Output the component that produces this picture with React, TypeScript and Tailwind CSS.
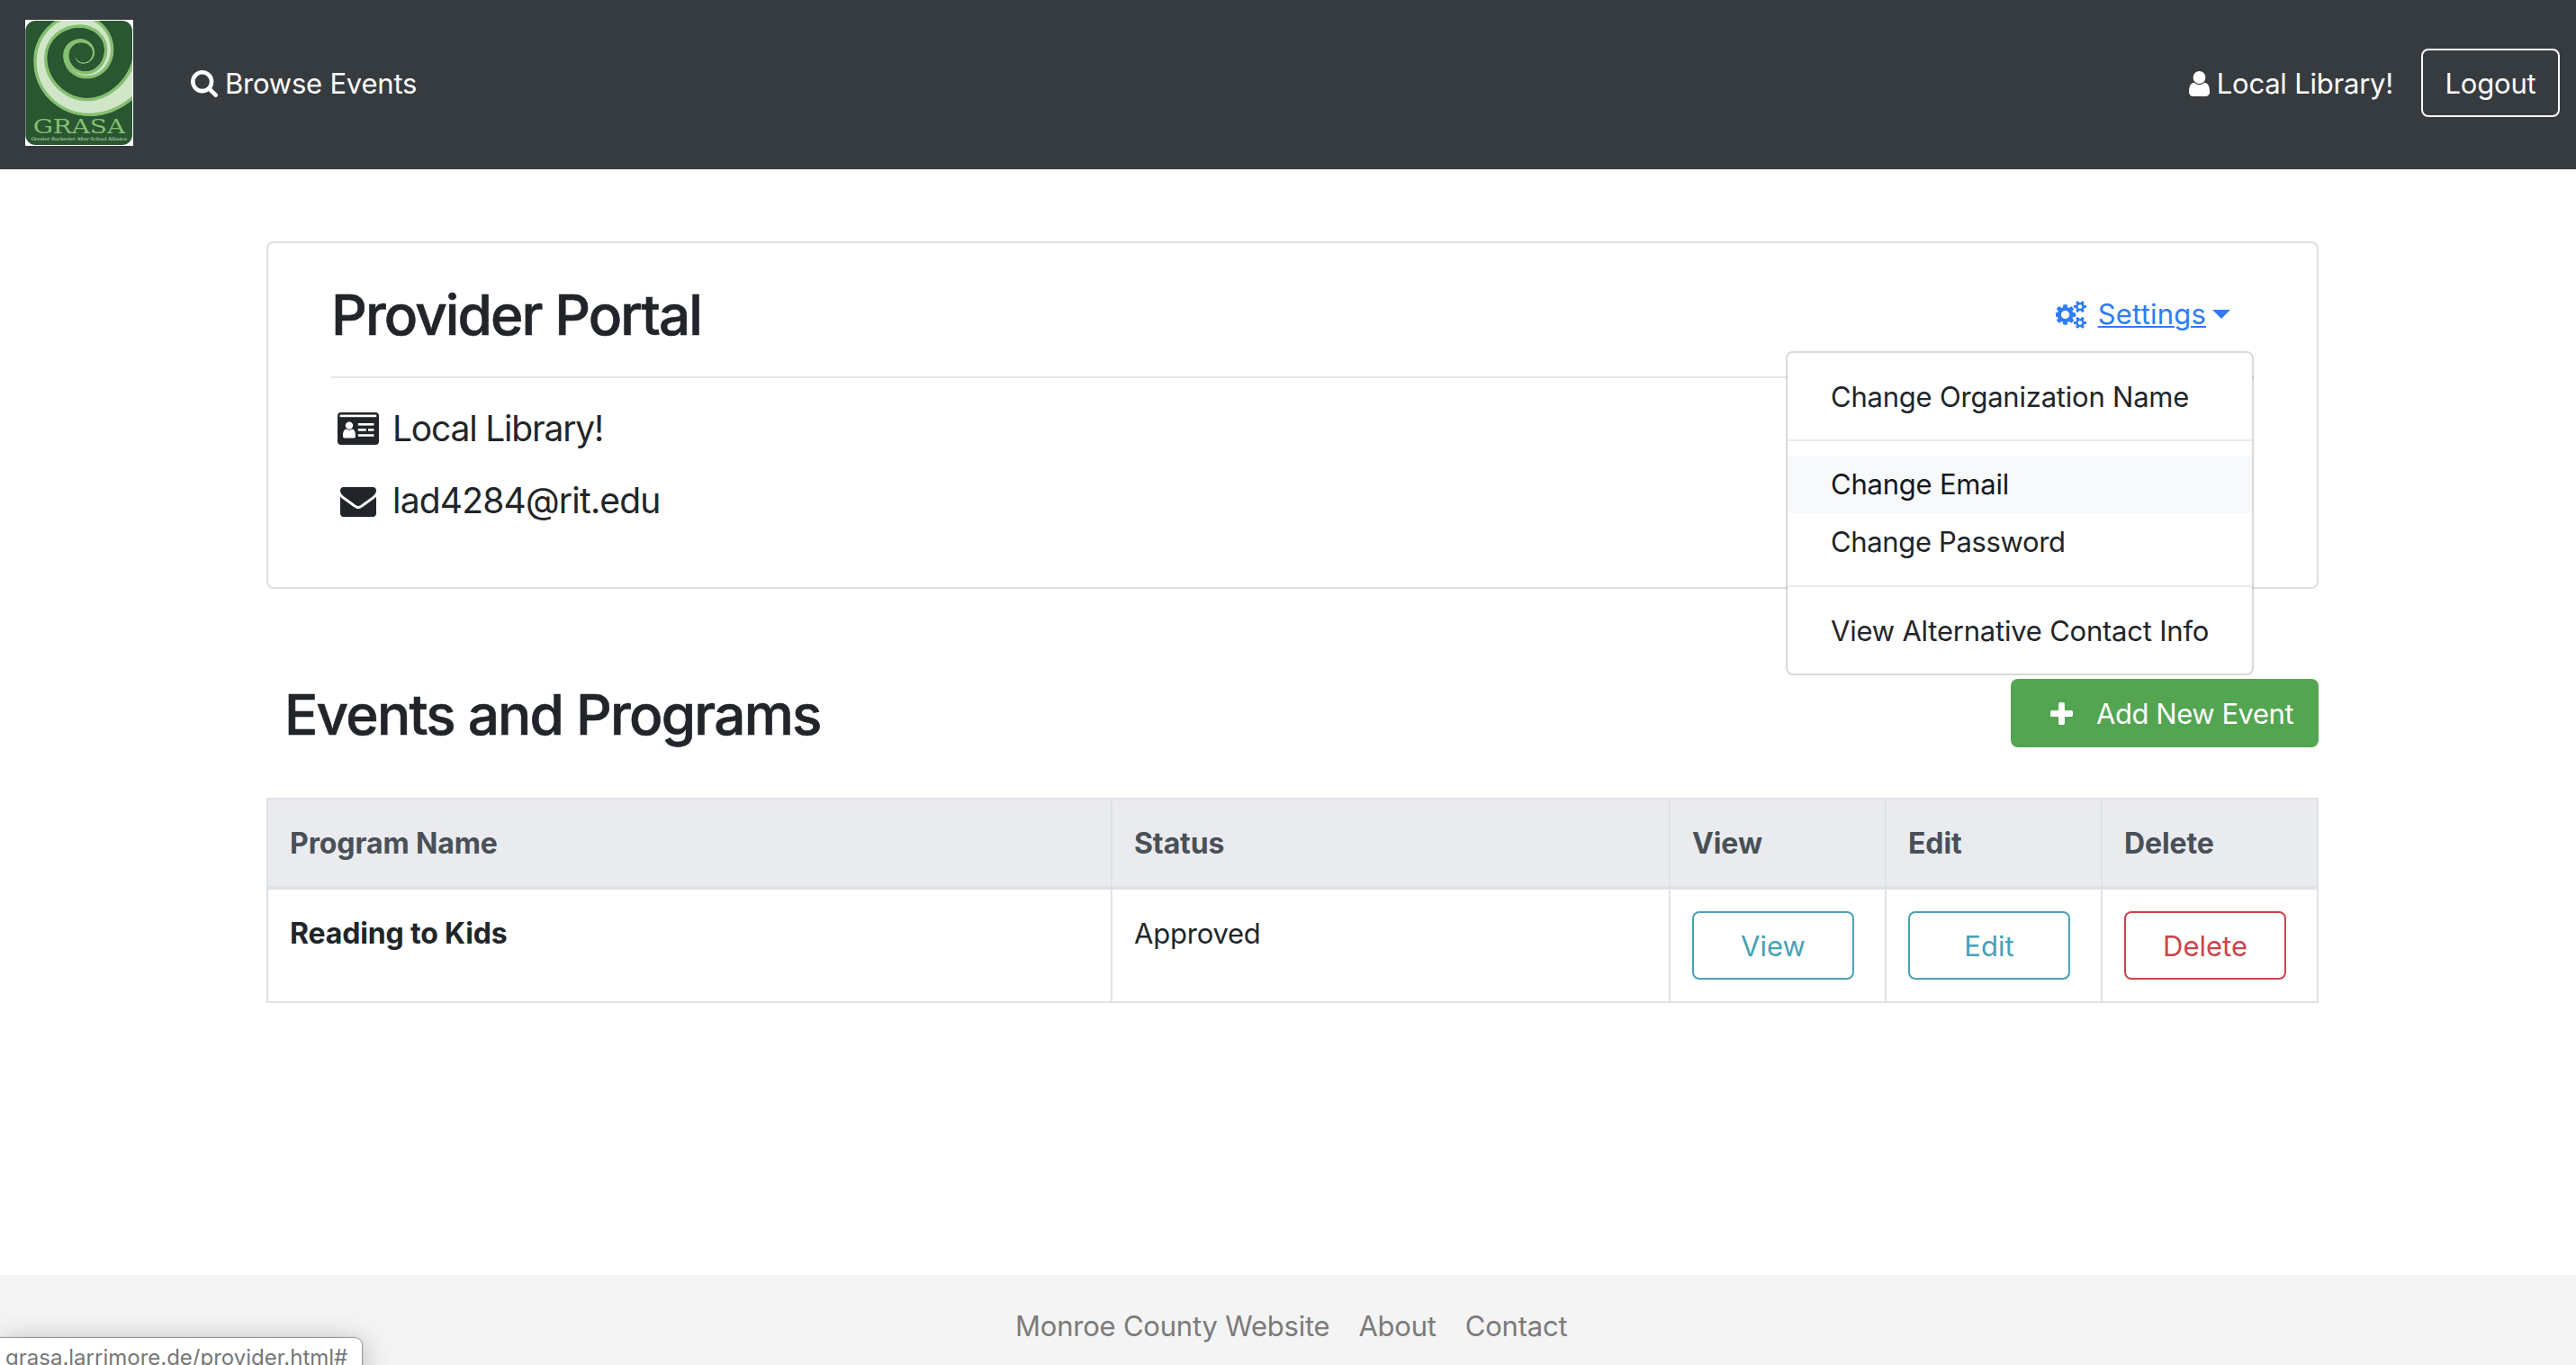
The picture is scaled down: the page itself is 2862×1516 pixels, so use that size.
import type { ReactNode } from "react";

function Glyph({ d, box, className }: { d: string; box: string; className: string }) {
  return (
    <svg viewBox={box} className={className} fill="currentColor" preserveAspectRatio="none" aria-hidden="true">
      <path d={d} />
    </svg>
  );
}

const SEARCH =
  "M1216 832q0-185-131.5-316.5t-316.5-131.5-316.5 131.5-131.5 316.5 131.5 316.5 316.5 131.5 316.5-131.5 131.5-316.5zm512 832q0 52-38 90t-90 38q-54 0-90-38l-343-342q-179 124-399 124-143 0-273.5-55.5t-225-150-150-225-55.5-273.5 55.5-273.5 150-225 225-150 273.5-55.5 273.5 55.5 225 150 150 225 55.5 273.5q0 220-124 399l343 343q37 37 37 90z";
const USER =
  "M1536 1399q0 109-62.5 187t-150.5 78h-854q-88 0-150.5-78t-62.5-187q0-85 8.5-160.5t31.5-152 58.5-131 94-89 134.5-34.5q131 128 313 128t313-128q76 0 134.5 34.5t94 89 58.5 131 31.5 152 8.5 160.5zm-256-887q0 159-112.5 271.5t-271.5 112.5-271.5-112.5-112.5-271.5 112.5-271.5 271.5-112.5 271.5 112.5 112.5 271.5z";
const ENVELOPE =
  "M1792 710v794q0 66-47 113t-113 47h-1472q-66 0-113-47t-47-113v-794q44 49 101 87 362 246 497 345 57 42 92.5 65.5t94.5 48 110 24.5h2q51 0 110-24.5t94.5-48 92.5-65.5q170-123 498-345 57-39 100-87zm0-294q0 79-49 151t-122 123q-376 261-468 325-10 7-42.5 31t-54 38.5-52 32.5-57.5 27-50 9h-2q-23 0-50-9t-57.5-27-52-32.5-54-38.5-42.5-31q-91-64-262-182.5t-205-142.5q-62-42-117-115.5t-55-136.5q0-78 41.5-130t118.5-52h1472q65 0 112.5 47t47.5 113z";
const PLUS =
  "M1600 736v192q0 40-28 68t-68 28h-416v416q0 40-28 68t-68 28h-192q-40 0-68-28t-28-68v-416h-416q-40 0-68-28t-28-68v-192q0-40 28-68t68-28h416v-416q0-40 28-68t68-28h192q40 0 68 28t28 68v416h416q40 0 68 28t28 68z";
const COGS =
  "M832 896q0-106-75-181t-181-75-181 75-75 181 75 181 181 75 181-75 75-181zm768 512q0-52-38-90t-90-38-90 38-38 90q0 53 37.5 90.5t90.5 37.5 90.5-37.5 37.5-90.5zm0-1024q0-52-38-90t-90-38-90 38-38 90q0 53 37.5 90.5t90.5 37.5 90.5-37.5 37.5-90.5zm-384 421v185q0 10-7 19.5t-16 10.5l-155 24q-11 35-32 76 34 48 90 115 7 11 7 20 0 12-7 19-23 30-82.5 89.5t-78.5 59.5q-11 0-21-7l-115-90q-37 19-77 31-11 108-23 155-7 24-30 24h-186q-11 0-20-7.5t-10-17.5l-23-153q-34-10-75-31l-118 89q-7 7-20 7-11 0-21-8-144-133-144-160 0-9 7-19 10-14 41-53t47-61q-23-44-35-82l-152-24q-10-1-17-9.5t-7-19.5v-185q0-10 7-19.5t16-10.5l155-24q11-35 32-76-34-48-90-115-7-11-7-20 0-12 7-20 22-30 82-89t79-59q11 0 21 7l115 90q34-18 77-32 11-108 23-154 7-24 30-24h186q11 0 20 7.5t10 17.5l23 153q34 10 75 31l118-89q8-7 20-7 11 0 21 8 144 133 144 160 0 8-7 19-12 16-42 54t-45 60q23 48 34 82l152 23q10 2 17 10.5t7 19.5zm640 533v140q0 16-149 31-12 27-30 52 51 113 51 138 0 4-4 7-122 71-124 71-8 0-46-47t-52-68q-20 2-30 2t-30-2q-14 21-52 68t-46 47q-2 0-124-71-4-3-4-7 0-25 51-138-18-25-30-52-149-15-149-31v-140q0-16 149-31 13-29 30-52-51-113-51-138 0-4 4-7 4-2 35-20t59-34 30-16q8 0 46 46.5t52 67.5q20-2 30-2t30 2q51-71 92-112l6-2q4 0 124 70 4 3 4 7 0 25-51 138 17 23 30 52 149 15 149 31zm0-1024v140q0 16-149 31-12 27-30 52 51 113 51 138 0 4-4 7-122 71-124 71-8 0-46-47t-52-68q-20 2-30 2t-30-2q-14 21-52 68t-46 47q-2 0-124-71-4-3-4-7 0-25 51-138-18-25-30-52-149-15-149-31v-140q0-16 149-31 13-29 30-52-51-113-51-138 0-4 4-7 4-2 35-20t59-34 30-16q8 0 46 46.5t52 67.5q20-2 30-2t30 2q51-71 92-112l6-2q4 0 124 70 4 3 4 7 0 25-51 138 17 23 30 52 149 15 149 31z";

const SWIRL =
  "M385 240C335 295 272 321 216 321C112 321 28 240 28 139C28 60 85 -18 178 -18C245 -18 295 38 295 99C295 153 255 196 206 196C162 196 127 162 127 119C127 88 152 64 184 64C210 64 231 84 231 109C231 130 214 146 194 146C180 146 168 137 168 124C170 135 182 143 194 143C212 143 225 128 225 109C225 90 207 76 186 76C163 76 145 95 145 119C145 148 170 172 201 172C236 172 264 140 264 99C264 58 227 26 181 26C126 26 73 66 73 129C73 200 138 261 206 261C275 261 342 200 358 130L385 90Z";

function IdCard() {
  return (
    <svg viewBox="0 0 46 36" className="ml-[7px] h-[36px] w-[46px]" aria-hidden="true">
      <rect width="46" height="36" rx="4" fill="#212529" />
      <g fill="#fff">
        <rect x="2.6" y="2.6" width="40.6" height="2.6" />
        <circle cx="13" cy="14.6" r="4.2" />
        <path d="M6 26c0-4.600 1.600-7.400 3.800-7.400 1 .8 2 1.100 3.200 1.100s2.200-.3 3.200-1.100c2.200 0 3.800 2.800 3.800 7.400 0 1.800-.8 2.600-2 2.600H8c-1.200 0-2-.8-2-2.600z" />
        <rect x="22.800" y="12" width="17.600" height="2.600" />
        <rect x="22.800" y="18.100" width="9" height="2.600" />
        <rect x="34" y="18.100" width="6.400" height="2.600" />
        <rect x="22.800" y="24.200" width="17.600" height="2.600" />
      </g>
    </svg>
  );
}

function Logo() {
  return (
    <svg viewBox="0 0 360 420" className="h-[140px] w-[120px]" role="img" aria-label="GRASA">
      <defs>
        <clipPath id="logo-card">
          <rect x="1" y="3" width="356" height="414" rx="34" />
        </clipPath>
        <clipPath id="logo-swirl">
          <path d={SWIRL} />
        </clipPath>
      </defs>
      <rect width="360" height="420" fill="#fff" />
      <g clipPath="url(#logo-card)">
        <rect width="360" height="420" fill="#2a5631" />
        <g clipPath="url(#logo-swirl)">
          <path d={SWIRL} fill="#d1e6c9" stroke="#84bf70" strokeWidth="20" />
        </g>
      </g>
      <text x="26" y="379" textLength="307" lengthAdjust="spacingAndGlyphs" fontSize="66" fontFamily="'DejaVu Serif', serif" fill="#84bf70">
        GRASA
      </text>
      <text x="20" y="401" textLength="320" lengthAdjust="spacingAndGlyphs" fontSize="15" fontFamily="'DejaVu Serif', serif" fill="#c4e0ba">
        Greater Rochester After-School Alliance
      </text>
    </svg>
  );
}

function OutlineButton({ children, tone }: { children: ReactNode; tone: "info" | "danger" }) {
  const color = tone === "info" ? "border-[#48a1b7] text-[#48a1b7]" : "border-[#cb444a] text-[#cb444a]";
  return <button className={`-mt-px block h-[76px] w-[180px] rounded-lg border-2 pt-px tracking-normal ${color}`}>{children}</button>;
}

function Settings() {
  return (
    <div className="relative flex h-[77px] w-[520px] items-start justify-end pt-[15px] pr-[26px]">
      <div className="flex h-[48px] items-center text-[#2e7cf6]">
        <Glyph d={COGS} box="0 6 1856 1780" className="mr-[13px] h-[31px] w-[34px]" />
        <a href="#" className="tracking-[0.200px] underline decoration-2 underline-offset-2">
          Settings
        </a>
        <svg viewBox="0 0 20 10" className="ml-[7px] h-[10px] w-[20px]" fill="currentColor" aria-hidden="true">
          <path d="M0 0H20L10 10Z" />
        </svg>
      </div>
      <div className="absolute top-[80px] right-0 z-10 flex w-[520px] flex-col rounded-lg border-2 border-black/15 bg-white bg-clip-padding py-4 whitespace-nowrap">
        <a className="px-[48px] pt-[9px] pb-[7px]">Change Organization Name</a>
        <hr className="my-4 border-t-2 border-[#eaebef]" />
        <a className="bg-[#f8f9fb] px-[48px] py-2 text-[#16181b]">Change Email</a>
        <a className="px-[48px] py-2 tracking-[-0.350px]">Change Password</a>
        <hr className="my-4 border-t-2 border-[#eaebef]" />
        <a className="px-[48px] pt-[9px] pb-[7px]">View Alternative Contact Info</a>
      </div>
    </div>
  );
}

export default function App() {
  const cell = "border-r-2 border-[#dee2e6] pl-6 pt-[25px]";
  return (
    <div className="relative flex h-[1516px] w-[2862px] flex-col overflow-hidden bg-white font-['Inter',sans-serif] text-[31px] leading-[48px] tracking-[-0.220px] text-[#212529]">
      <nav className="flex h-[188px] items-center bg-[#363b3f] pr-[18px] pb-[4px] pl-[28px] text-white">
        <Logo />
        <a className="ml-[64px] flex items-center">
          <Glyph d={SEARCH} box="64 128 1664 1664" className="mt-[2px] mr-[8px] h-[30px] w-[30px]" />
          <span className="pt-[2px]">Browse Events</span>
        </a>
        <a className="ml-auto flex items-center">
          <Glyph d={USER} box="256 128 1280 1536" className="mt-[2px] mr-[8px] h-[28px] w-[23px]" />
          <span className="pt-[2px]">Local Library!</span>
        </a>
        <button className="ml-[31px] h-[76px] w-[154px] rounded-lg border-2 border-[#f8f9fa] pt-[2px] text-[#f8f9fa]">Logout</button>
      </nav>

      <main className="mt-[80px] ml-[296px] flex w-[2280px] flex-col">
        <section className="h-[386px] rounded-lg border-2 border-[#dfdfdf] px-[70px] pt-[40px]">
          <div className="flex h-[108px] justify-between">
            <h1 className="pt-px text-[62px] leading-[77px] font-medium tracking-[-1.900px] [-webkit-text-stroke:0.6px_#212529]">Provider Portal</h1>
            <Settings />
          </div>
          <hr className="border-t-2 border-[#e5e5e5]" />
          <div className="mt-[26px] flex flex-col gap-[20px] text-[39px] leading-[60px]">
            <div className="flex items-center">
              <div className="w-[68px]">
                <IdCard />
              </div>
              <span className="tracking-[-1.200px]">Local Library!</span>
            </div>
            <div className="flex items-center">
              <div className="w-[68px]">
                <Glyph d={ENVELOPE} box="0 256 1792 1408" className="mt-[2px] ml-[10px] h-[33px] w-[40px]" />
              </div>
              <span className="tracking-[-0.800px]">lad4284@rit.edu</span>
            </div>
          </div>
        </section>

        <div className="mt-[100px] flex h-[76px] justify-between pl-[20px]">
          <h2 className="text-[62px] leading-[79px] font-medium tracking-[-1.770px] [-webkit-text-stroke:0.6px_#212529]">Events and Programs</h2>
          <button className="flex h-[76px] w-[342px] items-center rounded-lg bg-[#53a551] pl-[44px] tracking-[-0.450px] whitespace-nowrap text-white">
            <Glyph d={PLUS} box="192 128 1408 1408" className="mr-[26px] h-[25px] w-[25px]" />
            <span className="pt-px">Add New Event</span>
          </button>
        </div>

        <div className="mt-[56px] border-2 border-r-0 border-[#dee2e6]">
          <div className="grid h-[100px] grid-cols-[938px_620px_240px_240px_240px] border-b-4 border-[#dee2e6] bg-[#eaebef] text-[32px] font-bold tracking-[-0.100px] text-[#495057]">
            <div className={cell}>Program Name</div>
            <div className={cell}>Status</div>
            <div className={cell}>View</div>
            <div className={cell}>Edit</div>
            <div className={cell}>Delete</div>
          </div>
          <div className="grid h-[124px] grid-cols-[938px_620px_240px_240px_240px]">
            <div className={`${cell} text-[32px] font-bold tracking-[-0.150px]`}>Reading to Kids</div>
            <div className={cell}>Approved</div>
            <div className={cell}>
              <OutlineButton tone="info">View</OutlineButton>
            </div>
            <div className={cell}>
              <OutlineButton tone="info">Edit</OutlineButton>
            </div>
            <div className={cell}>
              <OutlineButton tone="danger">Delete</OutlineButton>
            </div>
          </div>
        </div>
      </main>

      <footer className="mt-auto flex h-[100px] gap-[32px] bg-[#f4f4f4] pt-[33px] pl-[1128px] text-[#7b7b7b]">
        <a>Monroe County Website</a>
        <a>About</a>
        <a>Contact</a>
      </footer>

      <div className="absolute top-[1486px] left-0 h-[40px] w-[402px] rounded-tr-lg bg-white pl-[6px] text-[24px] leading-[43px] tracking-normal text-[#747775] shadow-[0_0_1px_1px_rgba(0,0,0,0.35),0_6px_32px_rgba(0,0,0,0.3)]">
        grasa.larrimore.de/provider.html#
      </div>
    </div>
  );
}
